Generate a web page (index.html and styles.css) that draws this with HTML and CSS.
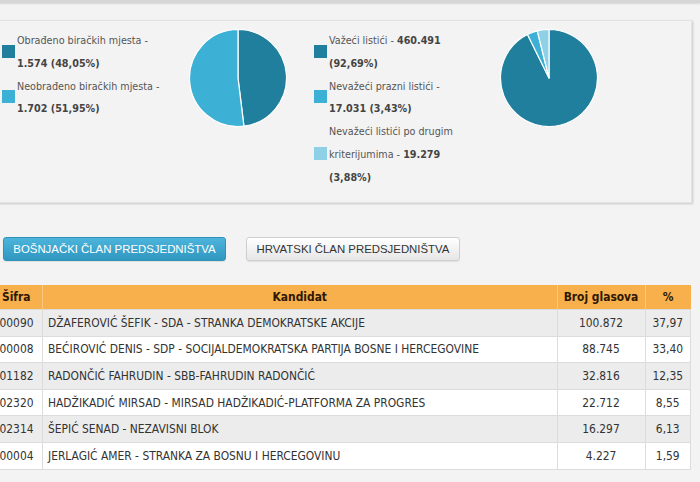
FILE: index.html
```html
<!DOCTYPE html>
<html lang="bs">
<head>
<meta charset="utf-8">
<title>Rezultati</title>
<link rel="stylesheet" href="styles.css">
</head>
<body>
<div class="topbar"></div>
<div class="page">
  <section class="stats">
    <div class="legend">
      <div class="item"><span class="sw c1"></span><div class="txt">Obrađeno biračkih mjesta -<br><b>1.574 (48,05%)</b></div></div>
      <div class="item"><span class="sw c2"></span><div class="txt">Neobrađeno biračkih mjesta -<br><b>1.702 (51,95%)</b></div></div>
    </div>
    <svg class="pie" width="98" height="98" viewBox="0 0 98 98">
      <path class="c1f" d="M49,49 L49,0.5 A48.5,48.5 0 0,1 54.93,97.14 Z"/>
      <path class="c2f" d="M49,49 L54.93,97.14 A48.5,48.5 0 1,1 49,0.5 Z"/>
    </svg>
    <div class="legend legend2">
      <div class="item"><span class="sw c1"></span><div class="txt">Važeći listići - <b>460.491</b><br><b>(92,69%)</b></div></div>
      <div class="item"><span class="sw c2"></span><div class="txt">Nevažeći prazni listići -<br><b>17.031 (3,43%)</b></div></div>
      <div class="item"><span class="sw c3"></span><div class="txt">Nevažeći listići po drugim<br>kriterijumima - <b>19.279</b><br><b>(3,88%)</b></div></div>
    </div>
    <svg class="pie" width="98" height="98" viewBox="0 0 98 98">
      <path class="c1f" d="M49,49 L49,0.5 A48.5,48.5 0 1,1 27.49,5.53 Z"/>
      <path class="c2f" d="M49,49 L27.49,5.53 A48.5,48.5 0 0,1 37.29,1.93 Z"/>
      <path class="c3f" d="M49,49 L37.29,1.93 A48.5,48.5 0 0,1 49,0.5 Z"/>
    </svg>
  </section>

  <div class="tabs">
    <button class="btn active">BOŠNJAČKI ČLAN PREDSJEDNIŠTVA</button>
    <button class="btn">HRVATSKI ČLAN PREDSJEDNIŠTVA</button>
  </div>

  <table class="results">
    <thead>
      <tr><th class="code">Šifra</th><th>Kandidat</th><th class="votes">Broj glasova</th><th class="pct">%</th></tr>
    </thead>
    <tbody>
      <tr><td class="code">00090</td><td class="name">DŽAFEROVIĆ ŠEFIK - SDA - STRANKA DEMOKRATSKE AKCIJE</td><td class="num">100.872</td><td class="num">37,97</td></tr>
      <tr><td class="code">00008</td><td class="name">BEĆIROVIĆ DENIS - SDP - SOCIJALDEMOKRATSKA PARTIJA BOSNE I HERCEGOVINE</td><td class="num">88.745</td><td class="num">33,40</td></tr>
      <tr><td class="code">01182</td><td class="name">RADONČIĆ FAHRUDIN - SBB-FAHRUDIN RADONČIĆ</td><td class="num">32.816</td><td class="num">12,35</td></tr>
      <tr><td class="code">02320</td><td class="name">HADŽIKADIĆ MIRSAD - MIRSAD HADŽIKADIĆ-PLATFORMA ZA PROGRES</td><td class="num">22.712</td><td class="num">8,55</td></tr>
      <tr><td class="code">02314</td><td class="name">ŠEPIĆ SENAD - NEZAVISNI BLOK</td><td class="num">16.297</td><td class="num">6,13</td></tr>
      <tr><td class="code">00004</td><td class="name">JERLAGIĆ AMER - STRANKA ZA BOSNU I HERCEGOVINU</td><td class="num">4.227</td><td class="num">1,59</td></tr>
    </tbody>
  </table>
</div>
</body>
</html>
```

FILE: styles.css
```css
html, body {
  margin: 0;
  padding: 0;
  background: #f3f3f3;
  overflow: hidden;
}
body {
  font-family: "DejaVu Sans Condensed", "DejaVu Sans", sans-serif;
  font-stretch: condensed;
  font-size: 10.7px;
  color: #555;
}
.topbar {
  height: 3px;
  background: #d6d6d6;
  box-shadow: 0 1px 2px rgba(0,0,0,0.12);
}
.page {
  margin-left: -10px;
  width: 702px;
}
.stats {
  margin-top: 17px;
  height: 183px;
  box-sizing: border-box;
  border: 1px solid #e4e4e4;
  box-shadow: 1px 1px 2px rgba(0,0,0,0.18);
  display: flex;
  align-items: flex-start;
  padding: 8px 0 0 11px;
}
.legend {
  width: 187px;
  padding-top: 1px;
}
.legend2 {
  width: 186px;
  margin-left: 27px;
}
.item {
  display: flex;
  align-items: center;
}
.sw {
  width: 13px;
  height: 13px;
  flex: none;
  margin-right: 2px;
  margin-bottom: 3px;
}
.txt {
  line-height: 22.8px;
  white-space: nowrap;
}
.txt b { color: #444; }
.c1 { background: #1f7f9d; }
.c2 { background: #3db0d6; }
.c3 { background: #8ed1e7; }
.pie { flex: none; display: block; }
.pie path { stroke: #fff; stroke-width: 1.2; stroke-linejoin: round; }
.c1f { fill: #1f7f9d; }
.c2f { fill: #3db0d6; }
.c3f { fill: #8ed1e7; }

.tabs {
  display: flex;
  gap: 20px;
  margin-top: 34px;
  padding-left: 13px;
}
.btn {
  height: 24px;
  box-sizing: border-box;
  font-family: "Liberation Sans", Arial, sans-serif;
  font-size: 11.4px;
  border-radius: 3px;
  padding: 0 6px;
  cursor: pointer;
  background: linear-gradient(#ffffff, #e6e6e6);
  border: 1px solid #cfcfcf;
  color: #333;
  box-shadow: 0 1px 1px rgba(0,0,0,0.08);
  white-space: nowrap;
}
.btn.active {
  width: 223px;
  background: linear-gradient(#4db5dc, #2f97c0);
  border-color: #2e91b8;
  color: #fff;
}
.btn:not(.active) { width: 214px; }

.results {
  margin-top: 24px;
  width: 701px;
  border-collapse: collapse;
  color: #333;
  font-size: 11.9px;
}
.results th {
  background: #f8b04c;
  color: #2e1800;
  font-weight: bold;
  height: 24px;
  padding: 0;
  border-left: 1px solid #fbc982;
  text-align: center;
}
.results th:first-child { border-left: none; }
.results td {
  height: 25.6px;
  padding: 0;
  border: 1px solid #dcdcdc;
  text-align: center;
}
.results tbody tr:nth-child(odd) td { background: #ececec; }
.results tbody tr:nth-child(even) td { background: #fff; }
.results .code { width: 51px; }
.results .votes { width: 87px; }
.results .pct { width: 45px; }
.results td.name { text-align: left; padding-left: 5px; }
```
